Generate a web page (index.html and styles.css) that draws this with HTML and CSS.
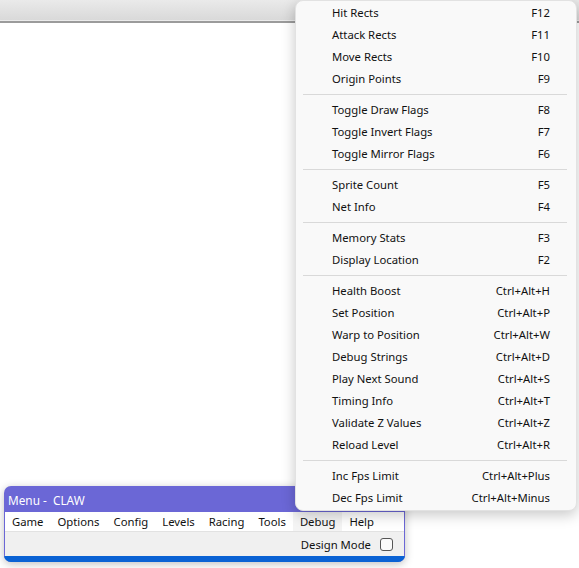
FILE: index.html
```html
<!DOCTYPE html>
<html>
<head>
<meta charset="utf-8">
<link rel="stylesheet" href="styles.css">
</head>
<body>
<div class="page">
  <div class="topbar"></div>
  <div class="topline"></div>
  <div class="canvas"></div>

  <div class="window">
    <div class="titlebar"><span class="title">Menu -  CLAW</span></div>
    <div class="menubar">
      <span class="mitem">Game</span>
      <span class="mitem">Options</span>
      <span class="mitem">Config</span>
      <span class="mitem">Levels</span>
      <span class="mitem">Racing</span>
      <span class="mitem">Tools</span>
      <span class="mitem active">Debug</span>
      <span class="mitem">Help</span>
    </div>
    <div class="toolbar">
      <span class="design">Design Mode</span>
      <span class="checkbox"></span>
    </div>
    <div class="statusbar"></div>
  </div>

  <div class="popup">
    <div class="row"><span>Hit Rects</span><span>F12</span></div>
    <div class="row"><span>Attack Rects</span><span>F11</span></div>
    <div class="row"><span>Move Rects</span><span>F10</span></div>
    <div class="row"><span>Origin Points</span><span>F9</span></div>
    <div class="sep"></div>
    <div class="row"><span>Toggle Draw Flags</span><span>F8</span></div>
    <div class="row"><span>Toggle Invert Flags</span><span>F7</span></div>
    <div class="row"><span>Toggle Mirror Flags</span><span>F6</span></div>
    <div class="sep"></div>
    <div class="row"><span>Sprite Count</span><span>F5</span></div>
    <div class="row"><span>Net Info</span><span>F4</span></div>
    <div class="sep"></div>
    <div class="row"><span>Memory Stats</span><span>F3</span></div>
    <div class="row"><span>Display Location</span><span>F2</span></div>
    <div class="sep"></div>
    <div class="row"><span>Health Boost</span><span>Ctrl+Alt+H</span></div>
    <div class="row"><span>Set Position</span><span>Ctrl+Alt+P</span></div>
    <div class="row"><span>Warp to Position</span><span>Ctrl+Alt+W</span></div>
    <div class="row"><span>Debug Strings</span><span>Ctrl+Alt+D</span></div>
    <div class="row"><span>Play Next Sound</span><span>Ctrl+Alt+S</span></div>
    <div class="row"><span>Timing Info</span><span>Ctrl+Alt+T</span></div>
    <div class="row"><span>Validate Z Values</span><span>Ctrl+Alt+Z</span></div>
    <div class="row"><span>Reload Level</span><span>Ctrl+Alt+R</span></div>
    <div class="sep"></div>
    <div class="row"><span>Inc Fps Limit</span><span>Ctrl+Alt+Plus</span></div>
    <div class="row"><span>Dec Fps Limit</span><span>Ctrl+Alt+Minus</span></div>
  </div>
</div>
</body>
</html>
```

FILE: styles.css
```css
html, body {
  margin: 0;
  padding: 0;
  background: #ffffff;
}
body {
  font-family: "Noto Sans", "Open Sans", sans-serif;
  font-size: 11.3px;
  color: #111;
}
.page {
  position: relative;
  width: 579px;
  height: 568px;
  overflow: hidden;
  background: #ffffff;
}
.topbar {
  height: 20px;
  background: linear-gradient(#eaeaea, #d9d9d9);
  border-bottom: 1px solid #ebebeb;
}
.topline {
  height: 2px;
  background: #9b9b9b;
}
.canvas {
  height: 545px;
  background: #ffffff;
}

/* bottom window */
.window {
  position: absolute;
  left: 4px;
  top: 486px;
  width: 401px;
  background: #6b67d6;
  border-radius: 7px;
  overflow: hidden;
  box-shadow: 0 2px 8px rgba(0,0,0,0.25);
  display: flex;
  flex-direction: column;
}
.titlebar {
  height: 26px;
  display: flex;
  align-items: center;
  padding-left: 4px;
  padding-top: 1px;
  box-sizing: border-box;
}
.title {
  color: #ffffff;
  white-space: pre;
  font-size: 11.8px;
}
.menubar {
  margin: 0 1px;
  height: 19px;
  background: #ffffff;
  display: flex;
  align-items: center;
  border-bottom: 1px solid #e2e2e2;
}
.mitem {
  padding: 0 7px;
  height: 19px;
  line-height: 19px;
}
.mitem.active {
  background: #f4f4f4;
}
.toolbar {
  margin: 0 1px;
  height: 24px;
  background: #f0f0f0;
  display: flex;
  align-items: center;
  justify-content: flex-end;
  padding-right: 11px;
  gap: 9px;
}
.checkbox {
  width: 11px;
  height: 11px;
  border: 1px solid #555;
  border-radius: 3px;
  background: #fafafa;
}
.statusbar {
  height: 6px;
  background: #0a62d4;
}

/* popup menu */
.popup {
  position: absolute;
  left: 295px;
  top: 0;
  width: 280px;
  padding: 1px 0;
  background: #f9f9f9;
  border: 1px solid #e2e2e2;
  border-radius: 8px;
  box-shadow: 0 4px 14px rgba(0,0,0,0.22);
}
.row {
  height: 22px;
  line-height: 22px;
  display: flex;
  justify-content: space-between;
  padding: 0 26px 0 36px;
  white-space: nowrap;
}
.sep {
  height: 1px;
  background: #d9d9d9;
  margin: 4px 9px 4px 7px;
}
```
